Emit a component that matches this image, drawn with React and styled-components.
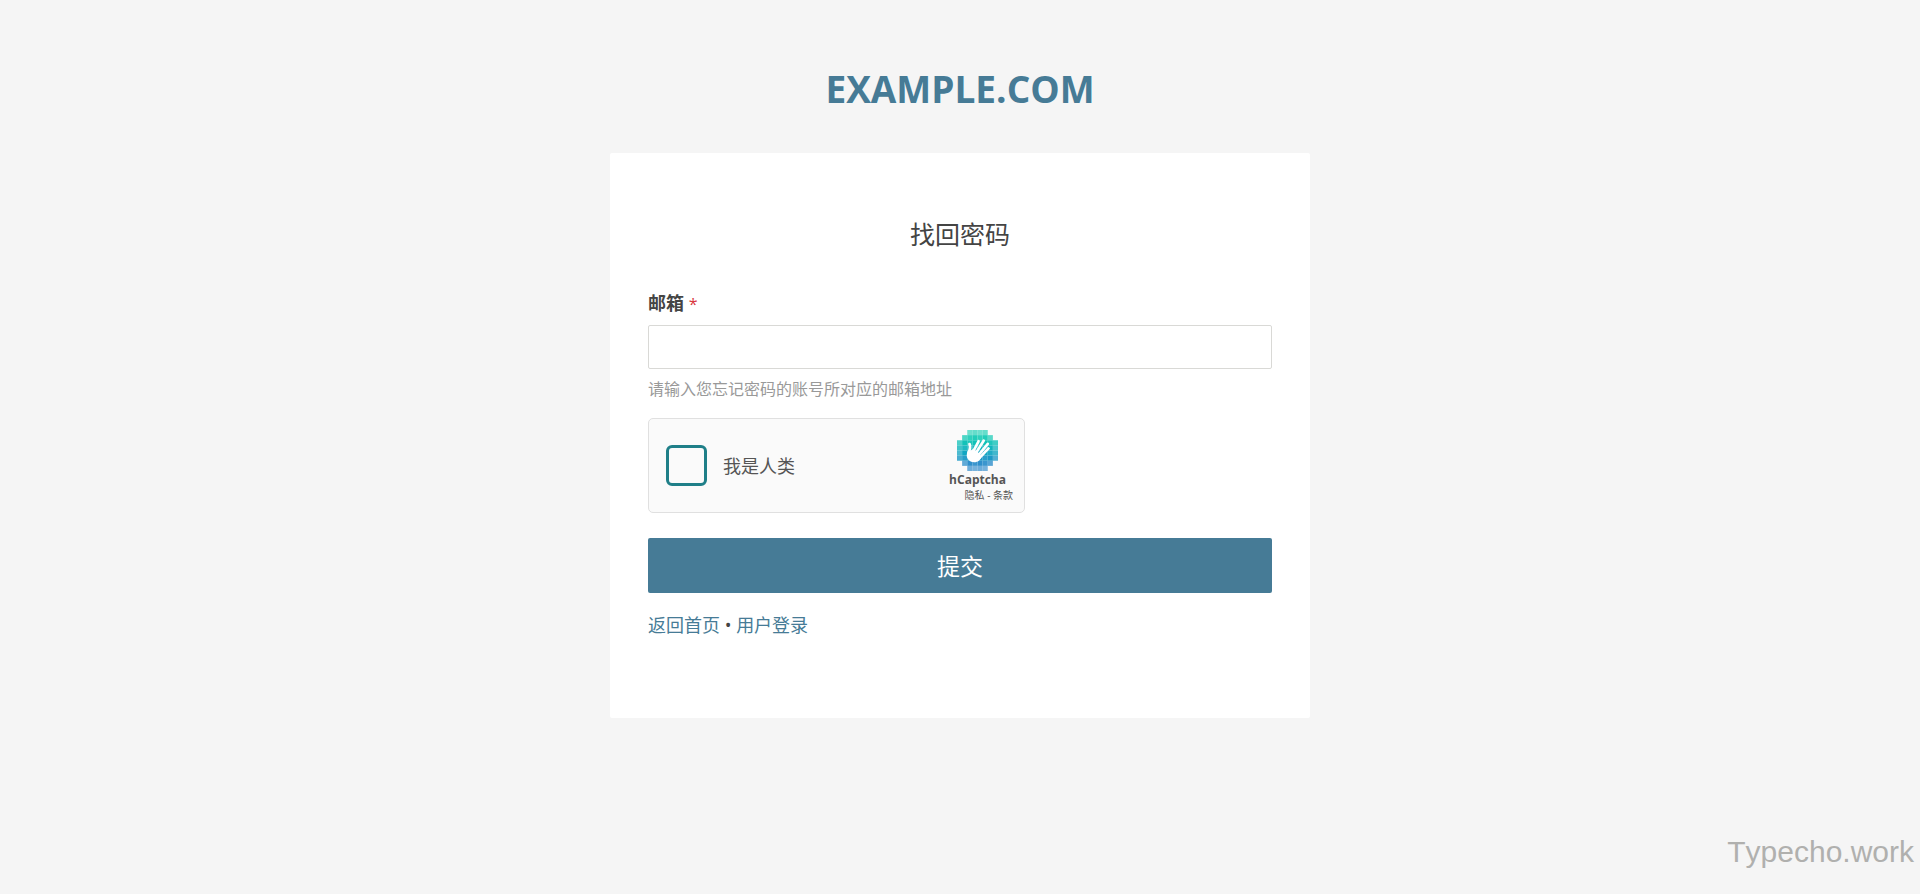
import React, { useState } from 'react';
import styled, { createGlobalStyle } from 'styled-components';

const GlobalStyle = createGlobalStyle`
  * {
    box-sizing: border-box;
  }
  body {
    margin: 0;
    background: #f5f5f5;
    color: #444;
    font-family: 'Open Sans', 'Noto Sans CJK SC', sans-serif;
    font-size: 18px;
    line-height: 26px;
  }
`;

// filled cells of the 8x8 badge: [first column, number of columns]
const badgeRows = [
  [2, 4],
  [1, 6],
  [0, 8],
  [0, 8],
  [0, 8],
  [0, 8],
  [1, 6],
  [2, 4],
];

const badgeColors = ['#3fd6bf', '#22cdb9', '#12c2b8', '#10b5bd', '#12a6c2', '#1b98c6', '#2f8fcb', '#4a9ad2'];

const CaptchaLogo = () => (
  <svg width='41' height='41' viewBox='0 0 32 32' aria-hidden='true'>
    {badgeRows.map(([start, count], row) =>
      Array.from({ length: count }, (_, i) => {
        const edge = i === 0 || i === count - 1 || row === 0 || row === 7;
        const light = (i + row) % 2 === 0 ? 0.94 : 1;
        return (
          <rect
            key={`${row}-${i}`}
            x={(start + i) * 4}
            y={row * 4}
            width='4'
            height='4'
            fill={badgeColors[row]}
            opacity={edge ? 0.8 * light : light}
          />
        );
      })
    )}
    <g fill='none' stroke='#fff' strokeLinecap='round' strokeLinejoin='round'>
      <path strokeWidth='2.2' d='M9.8 11c.9 2 .4 4-.6 6.6' />
      <path strokeWidth='2.1' d='M12.6 16.8L16.8 8.800' />
      <path strokeWidth='2.1' d='M14.800 18L20.800 8.400' />
      <path strokeWidth='2.1' d='M16.800 19.600L24 10.800' />
      <path strokeWidth='2.1' d='M17.800 21.600L24.600 14.400' />
    </g>
    <path
      fill='#fff'
      d='M8.4 16.400c1.800.3 2.800-.4 3.400-1.400l3.200 1.200 2.200 2 1.600 2.600c-.2 2.600-2.600 4.300-5.300 4.300-3.500 0-5.900-2.400-5.900-5.400 0-1.200.3-2.300.8-3.300z'
    />
  </svg>
);

const App = () => {
  const [email, setEmail] = useState('');
  const [human, setHuman] = useState(false);

  return (
    <Page>
      <GlobalStyle />
      <SiteName>EXAMPLE.COM</SiteName>
      <Card>
        <Heading>找回密码</Heading>
        <form onSubmit={(e) => e.preventDefault()}>
          <Label htmlFor='mail'>
            邮箱 <Required>*</Required>
          </Label>
          <TextInput
            id='mail'
            type='email'
            value={email}
            aria-describedby='mail-hint'
            onChange={(e) => setEmail(e.target.value)}
          />
          <Hint id='mail-hint'>请输入您忘记密码的账号所对应的邮箱地址</Hint>
          <Captcha>
            <CheckLabel>
              <CheckBox type='checkbox' checked={human} onChange={(e) => setHuman(e.target.checked)} />
              我是人类
            </CheckLabel>
            <Brand>
              <BrandMark>
                <CaptchaLogo />
                <BrandName>hCaptcha</BrandName>
              </BrandMark>
              <Terms>
                <a href='#privacy'>隐私</a> - <a href='#terms'>条款</a>
              </Terms>
            </Brand>
          </Captcha>
          <SubmitButton type='submit'>提交</SubmitButton>
        </form>
        <Links>
          <a href='#home'>返回首页</a> • <a href='#login'>用户登录</a>
        </Links>
      </Card>
      <Watermark>Typecho.work</Watermark>
    </Page>
  );
};

const Page = styled.div`
  min-height: 100vh;
  display: flex;
  flex-direction: column;
  align-items: center;
  padding-top: 64px;
`;

const SiteName = styled.h1`
  margin: 0 0 39px;
  color: #467b96;
  font-size: 37px;
  line-height: 50px;
  font-weight: 700;
`;

const Card = styled.main`
  width: 100%;
  max-width: 700px;
  padding: 62px 38px 80px;
  background: #fff;
  border-radius: 2px;
`;

const Heading = styled.h2`
  margin: 0 0 37px;
  font-size: 25px;
  line-height: 38px;
  font-weight: 400;
  text-align: center;
`;

const Label = styled.label`
  display: block;
  margin-bottom: 8px;
  font-weight: 700;
`;

const Required = styled.span`
  color: #d9363e;
  font-size: 16px;
  font-weight: 400;
`;

const TextInput = styled.input`
  display: block;
  width: 100%;
  height: 44px;
  padding: 8px 12px;
  border: 1px solid #d9d9d6;
  border-radius: 2px;
  background: #fff;
  color: inherit;
  font: inherit;
`;

const Hint = styled.p`
  margin: 8px 0 17px;
  color: #999;
  font-size: 16px;
  line-height: 24px;
`;

const Captcha = styled.div`
  display: flex;
  align-items: center;
  justify-content: space-between;
  max-width: 377px;
  height: 95px;
  margin-bottom: 25px;
  padding: 0 11px 0 17px;
  border: 1px solid #e0e0e0;
  border-radius: 5px;
  background: #fafafa;
`;

const CheckLabel = styled.label`
  display: flex;
  align-items: center;
  gap: 16px;
  color: #555;
`;

const CheckBox = styled.input`
  appearance: none;
  width: 41px;
  height: 41px;
  margin: 0;
  border: 3px solid #1f7f88;
  border-radius: 6px;
  background: #fafafa;
  &:checked {
    background: #1f7f88;
  }
`;

const Brand = styled.div`
  display: flex;
  flex-direction: column;
`;

const BrandMark = styled.div`
  display: flex;
  flex-direction: column;
  align-items: center;
  padding-right: 7px;
`;

const BrandName = styled.span`
  color: #555;
  font-size: 12px;
  line-height: 18px;
  font-weight: 700;
`;

const Terms = styled.span`
  align-self: flex-end;
  color: #555;
  font-size: 10px;
  line-height: 12px;
  a {
    color: inherit;
    text-decoration: none;
  }
`;

const SubmitButton = styled.button`
  display: block;
  width: 100%;
  height: 55px;
  border: none;
  border-radius: 2px;
  background: #467b96;
  color: #fff;
  font-family: inherit;
  font-size: 23px;
  line-height: 34px;
  cursor: pointer;
`;

const Links = styled.p`
  margin: 19px 0 0;
  a {
    color: #467b96;
    text-decoration: none;
  }
`;

const Watermark = styled.footer`
  align-self: flex-end;
  margin-top: auto;
  padding: 0 6px 24px;
  color: #b0b0ae;
  font-family: 'Liberation Sans', sans-serif;
  font-size: 30px;
  font-kerning: none;
  line-height: 36px;
`;

export default App;
